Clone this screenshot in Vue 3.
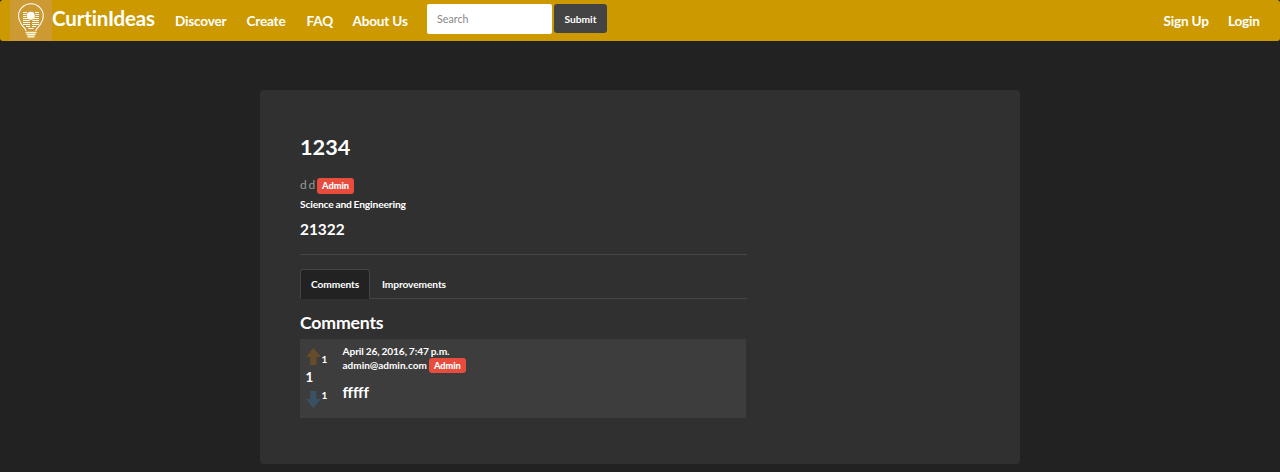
<script setup>
const links = [
  { label: 'Discover', cls: 'discover' },
  { label: 'Create', cls: 'create' },
  { label: 'FAQ', cls: 'faq' },
  { label: 'About Us', cls: 'about' },
]
</script>

<template>
  <div class="page">
    <nav class="navbar">
      <svg class="logo" viewBox="0 0 42 41" width="42" height="41">
        <rect width="42" height="41" fill="#cc9933" />
        <g fill="none" stroke="#fff">
          <path d="M16 31C15.500 28 13.500 27.500 11.500 24.500C9.500 21.500 8.500 19 8.500 16a12.400 12.200 0 0 1 24.800 0C33.300 19 32.300 21.500 30.300 24.500C28.300 27.500 26.300 28 25.800 31" stroke-width="1.100" />
          <path d="M13 12.500h4M13 14.500h3.500M13 16.500h3.500M13 18.500h5M13 20.500h6.500M13 22.500h7M13 24.500h7M25 12.500h4M25.500 14.500H29M25.500 16.500H29M24 18.500h5M22.500 20.500H29M22 22.500h7M22 24.500h7M16 26.500h4M22 26.500h4M18.500 28.500h5" stroke-width="1" />
          <path d="M15.500 32.500h11M16.500 34.500h9M17.500 36.700h7" stroke="#fff4d8" stroke-width="1.700" />
        </g>
        <circle cx="20.800" cy="15.700" r="4" fill="#fff" />
      </svg>
      <a class="brand">CurtinIdeas</a>
      <a v-for="l in links" :key="l.label" class="link" :class="l.cls">{{ l.label }}</a>
      <form class="search" @submit.prevent>
        <input type="text" placeholder="Search" />
        <button type="submit">Submit</button>
      </form>
      <div class="account">
        <a class="link signup">Sign Up</a>
        <a class="link login">Login</a>
      </div>
    </nav>

    <main class="jumbotron">
      <div class="content">
        <h1>1234</h1>
        <div class="author"><span>d d</span><b class="tag">Admin</b></div>
        <div class="faculty">Science and Engineering</div>
        <div class="body">21322</div>
        <hr />
        <div class="tabs">
          <a class="tab active">Comments</a>
          <a class="tab improvements">Improvements</a>
        </div>
        <h2>Comments</h2>
        <article class="comment">
          <div class="votes">
            <div class="vote">
              <svg width="15" height="17" viewBox="0 0 15 17"><path d="M7.300 0L15 9h-4.500v8H4.200V9H0z" fill="#664c2a" /></svg>
              <span>1</span>
            </div>
            <div class="score">1</div>
            <div class="vote down">
              <svg width="15" height="17" viewBox="0 0 15 17"><path d="M7.300 17L15 8h-4.500V0H4.200v8H0z" fill="#395161" /></svg>
              <span>1</span>
            </div>
          </div>
          <div class="details">
            <div class="date">April 26, 2016, 7:47 p.m.</div>
            <div class="mail"><span>admin@admin.com</span><b class="tag">Admin</b></div>
            <div class="text">fffff</div>
          </div>
        </article>
      </div>
    </main>
  </div>
</template>

<style>
body { background: #222; }
</style>

<style scoped>
* { box-sizing: border-box; }
.page { height: 472px; overflow: hidden; background: #222; color: #fff; font-family: Lato, sans-serif; font-size: 10px; font-weight: 700; white-space: nowrap; }
.navbar { height: 41px; display: flex; background: #c90; border-radius: 3px; padding-left: 10px; }
.logo { flex: none; }
.brand { width: 113px; font-size: 20.5px; line-height: 37px; letter-spacing: -0.15px; }
.link { padding: 0 10px; font-size: 13.6px; line-height: 42px; letter-spacing: -0.2px; }
.discover { width: 71.500px; }
.create { width: 60px; }
.faq { width: 46px; }
.about { width: 75.500px; }
.search { display: flex; gap: 2px; padding: 4px 0 0 9px; }
input { width: 125px; height: 30px; border: 0; border-radius: 2px; padding: 0 10px 1px; background: #fff; font: 400 10.7px Lato, sans-serif; }
input::placeholder { color: #888; opacity: 1; }
button { width: 53px; height: 29px; border: 0; border-radius: 3px; padding: 0; color: #fff; background: #444; font: 700 10.2px Lato, sans-serif; }
.account { margin-left: auto; display: flex; }
.signup { width: 64.500px; }
.login { width: 62px; }
.jumbotron { width: 760px; height: 374px; margin: 49px auto 0; padding: 40px; border-radius: 4px; background: #303030; }
.content { width: 447px; }
h1 { height: 34px; margin: 0; font-size: 21.7px; line-height: 34px; }
.author { height: 17px; margin-top: 14px; display: flex; color: #999; font-size: 12px; font-weight: 400; line-height: 14px; }
.author span { width: 17px; word-spacing: -1.2px; }
.tag { height: 16px; width: 37px; border-radius: 3px; background: #e74c3c; color: #fff; text-align: center; font-size: 9.3px; font-weight: 900; letter-spacing: -0.1px; line-height: 15px; }
.faculty { margin-top: 2px; height: 14px; font-size: 10.3px; line-height: 14px; letter-spacing: -0.18px; word-spacing: -0.5px; }
.body { margin-top: 7px; height: 22px; font-size: 15.4px; line-height: 22px; }
hr { height: 1px; margin: 14px 0; border: 0; background: #464646; }
.tabs { height: 30px; display: flex; border-bottom: 1px solid #464646; }
.tab { height: 29px; padding: 0 12px; font-size: 10.2px; letter-spacing: -0.1px; line-height: 31px; }
.active { width: 70px; height: 30px; padding: 0 10px; border: 1px solid #464646; border-bottom-color: #222; border-radius: 3px 3px 0 0; background: #222; line-height: 29px; }
h2 { margin: 13px 0 5px; height: 22px; font-size: 17.7px; line-height: 21px; letter-spacing: -0.2px; }
.comment { width: 446px; height: 79px; padding: 6px 6px 6px 5.500px; display: flex; background: #3d3d3d; }
.votes { width: 37px; padding-top: 3px; }
.vote { height: 18px; display: flex; gap: 1px; line-height: 22px; }
.vote svg { flex: none; }
.down { line-height: 9px; }
.score { height: 25px; font-size: 13.33px; line-height: 23px; }
.date { height: 14px; font-size: 10.2px; line-height: 13px; letter-spacing: -0.1px; word-spacing: -0.5px; }
.mail { height: 16px; display: flex; gap: 2px; line-height: 13px; }
.mail .tag { height: 15px; margin-top: -1px; line-height: 15px; }
.text { height: 20px; margin-top: 7px; font-size: 15.3px; line-height: 20px; }
</style>
